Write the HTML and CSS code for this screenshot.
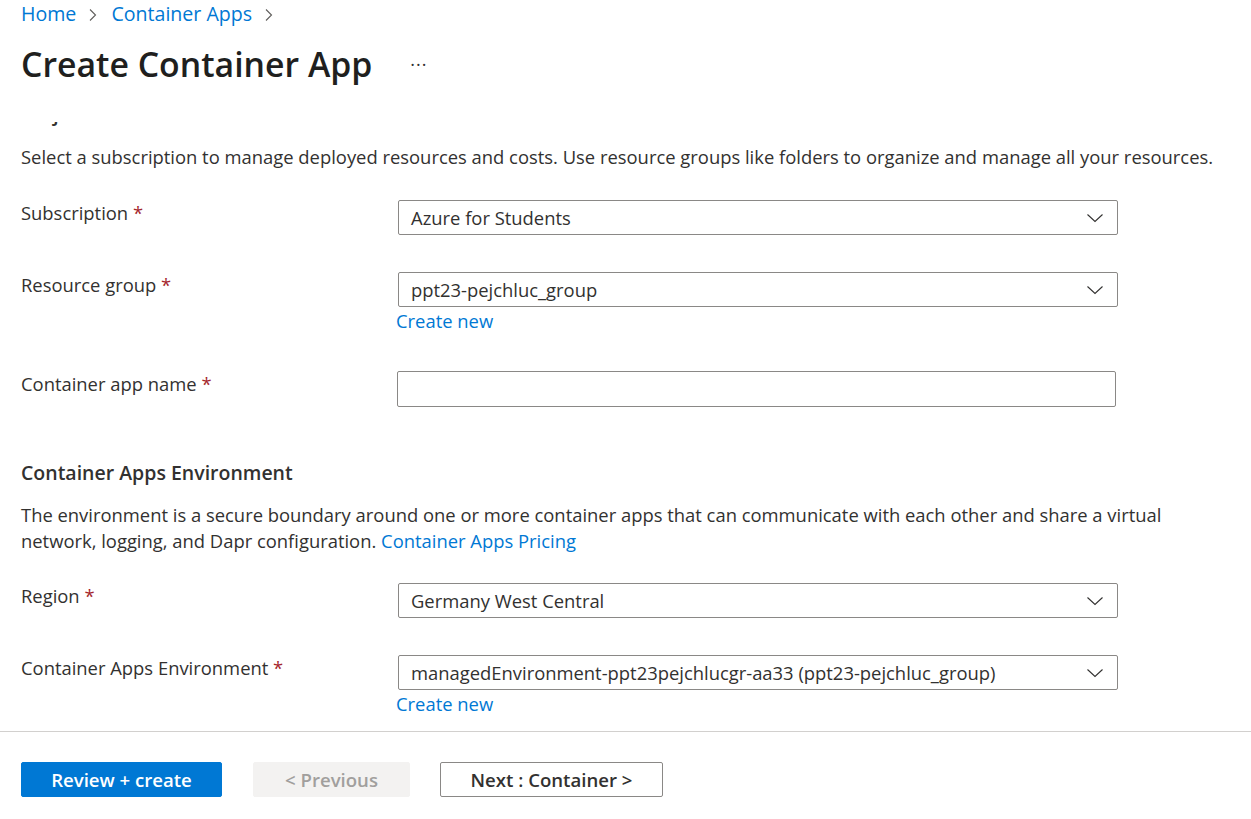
FILE: index.html
```html
<!DOCTYPE html>
<html lang="en">
<head>
<meta charset="utf-8">
<title>Create Container App</title>
<link rel="stylesheet" href="styles.css">
</head>
<body>
<div class="page">
  <header class="header">
    <nav class="breadcrumb">
      <a class="crumb" href="#">Home</a>
      <svg class="sep" width="10" height="14" viewBox="0 0 10 14"><polyline points="2,1.5 7.5,7 2,12.5" fill="none" stroke="#605e5c" stroke-width="1.1"/></svg>
      <a class="crumb" href="#">Container Apps</a>
      <svg class="sep" width="10" height="14" viewBox="0 0 10 14"><polyline points="2,1.5 7.5,7 2,12.5" fill="none" stroke="#605e5c" stroke-width="1.1"/></svg>
    </nav>
    <div class="title-row">
      <h1 class="title">Create Container App</h1>
      <span class="more">···</span>
    </div>
  </header>

  <main class="content">
    <div class="scroll">
      <h2 class="section-title clipped">Project details</h2>
      <p class="desc">Select a subscription to manage deployed resources and costs. Use resource groups like folders to organize and manage all your resources.</p>

      <div class="row first">
        <label class="label">Subscription <span class="req">*</span></label>
        <div class="control">
          <div class="select"><span>Azure for Students</span><svg class="chev" width="18" height="10" viewBox="0 0 18 10"><polyline points="1.5,1.5 9,8.5 16.5,1.5" fill="none" stroke="#323130" stroke-width="1.1"/></svg></div>
        </div>
      </div>

      <div class="row">
        <label class="label">Resource group <span class="req">*</span></label>
        <div class="control">
          <div class="select"><span>ppt23-pejchluc_group</span><svg class="chev" width="18" height="10" viewBox="0 0 18 10"><polyline points="1.5,1.5 9,8.5 16.5,1.5" fill="none" stroke="#323130" stroke-width="1.1"/></svg></div>
          <a class="link create" href="#">Create new</a>
        </div>
      </div>

      <div class="row">
        <label class="label">Container app name <span class="req">*</span></label>
        <div class="control">
          <div class="input"></div>
        </div>
      </div>

      <h2 class="section-title env">Container Apps Environment</h2>
      <p class="desc para">The environment is a secure boundary around one or more container apps that can communicate with each other and share a virtual network, logging, and Dapr configuration. <a class="link" href="#">Container Apps Pricing</a></p>

      <div class="row first2">
        <label class="label">Region <span class="req">*</span></label>
        <div class="control">
          <div class="select"><span>Germany West Central</span><svg class="chev" width="18" height="10" viewBox="0 0 18 10"><polyline points="1.5,1.5 9,8.5 16.5,1.5" fill="none" stroke="#323130" stroke-width="1.1"/></svg></div>
        </div>
      </div>

      <div class="row">
        <label class="label">Container Apps Environment <span class="req">*</span></label>
        <div class="control">
          <div class="select"><span>managedEnvironment-ppt23pejchlucgr-aa33 (ppt23-pejchluc_group)</span><svg class="chev" width="18" height="10" viewBox="0 0 18 10"><polyline points="1.5,1.5 9,8.5 16.5,1.5" fill="none" stroke="#323130" stroke-width="1.1"/></svg></div>
          <a class="link create" href="#">Create new</a>
        </div>
      </div>
    </div>
  </main>

  <footer class="footer">
    <button class="btn primary">Review + create</button>
    <button class="btn disabled">&lt; Previous</button>
    <button class="btn secondary">Next : Container &gt;</button>
  </footer>
</div>
</body>
</html>
```

FILE: styles.css
```css
* { box-sizing: border-box; }
html, body { margin: 0; padding: 0; background: #fff; }
body {
  font-family: "Open Sans", "Noto Sans", "Liberation Sans", sans-serif;
  color: #323130;
  font-size: 18.4px;
  width: 1251px;
  height: 819px;
  overflow: hidden;
}
.page { display: flex; flex-direction: column; height: 819px; }

.header { padding-left: 21px; height: 122px; flex: none; }
.breadcrumb { display: flex; align-items: center; height: 28px; }
.crumb { color: #0078d4; text-decoration: none; font-size: 19.6px; line-height: 28px; }
.sep { margin: 2px 13px 0 12px; }
.title-row { display: flex; align-items: center; height: 44px; margin-top: 14px; }
.title { margin: 0; font-size: 33.8px; font-weight: 600; color: #201f1e; line-height: 44px; }
.more { margin-left: 38px; font-size: 18px; color: #323130; letter-spacing: 1px; }

.content { flex: 1; overflow: hidden; }
.scroll { padding-left: 21px; margin-top: -21px; }

.section-title { margin: 0; font-size: 19.5px; font-weight: 600; line-height: 26px; color: #323130; }
.desc { margin: 0; line-height: 26px; width: 1230px; }
.clipped + .desc { margin-top: 17px; }

.row { display: grid; grid-template-columns: 377px 720px; margin-top: 37px; }
.row.first { margin-top: 30px; }
.row.first2 { margin-top: 29px; }
.label { line-height: 26px; padding-top: 0; }
.req { color: #a4262c; }
.control { display: flex; flex-direction: column; align-items: flex-start; }
.select {
  width: 720px; height: 35px; border: 1px solid #8a8886; border-radius: 2px;
  display: flex; align-items: center; justify-content: space-between;
  padding: 0 13px 1px 12px; white-space: nowrap;
}
.chev { display: block; margin-top: 2px; flex: none; }
.input {
  width: 719px; height: 36px; border: 1px solid #8a8886; border-radius: 2px;
  margin-left: -1px;
}
.link { color: #0078d4; text-decoration: none; }
.create { line-height: 26px; margin-top: 1px; margin-left: -2px; }

.section-title.env { margin-top: 53px; }
.para { margin-top: 16px; width: 1200px; }

.footer {
  flex: none; height: 88px; border-top: 1px solid #d2d0ce;
  display: flex; align-items: flex-start; padding: 30px 0 0 21px; gap: 30px;
}
.btn {
  height: 35px; border-radius: 2px; font-family: inherit; font-size: 18.6px; font-weight: 600;
  padding: 0; display: flex; align-items: center; justify-content: center;
}
.primary { width: 201px; background: #0078d4; border: 1px solid #0078d4; color: #fff; }
.disabled { width: 157px; background: #f3f2f1; border: 1px solid #f3f2f1; color: #a19f9d; margin-left: 1px; }
.secondary { width: 223px; background: #fff; border: 1px solid #8a8886; color: #323130; }
```
